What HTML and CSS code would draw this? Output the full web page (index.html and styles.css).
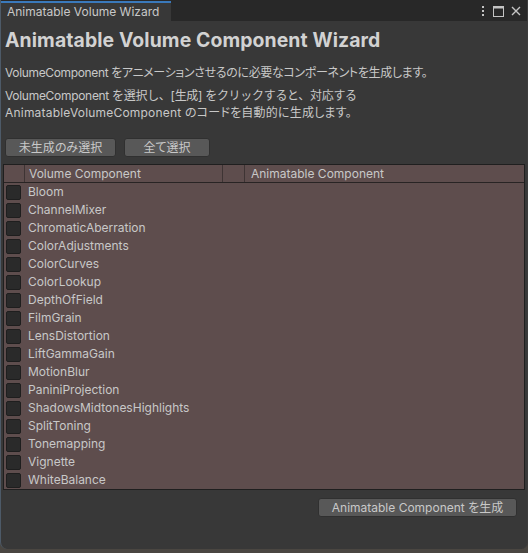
FILE: index.html
```html
<!DOCTYPE html>
<html lang="ja">
<head>
<meta charset="utf-8">
<link rel="stylesheet" href="styles.css">
</head>
<body>
<div class="window">
  <div class="topbar">
    <div class="tab">Animatable Volume Wizard</div>
    <div class="tools">
      <svg width="6" height="12" viewBox="0 0 6 12"><rect x="2" y="1" width="2" height="2" fill="#c4c4c4"/><rect x="2" y="5" width="2" height="2" fill="#c4c4c4"/><rect x="2" y="9" width="2" height="2" fill="#c4c4c4"/></svg>
      <svg width="11" height="11" viewBox="0 0 11 11"><rect x="0.5" y="0.5" width="10" height="10" fill="none" stroke="#c4c4c4"/><rect x="0.5" y="0.5" width="10" height="2" fill="#c4c4c4"/></svg>
      <svg width="10" height="10" viewBox="0 0 10 10"><path d="M1 1L9 9M9 1L1 9" stroke="#c4c4c4" stroke-width="1.4"/></svg>
    </div>
  </div>
  <div class="content">
    <h1 class="title">Animatable Volume Component Wizard</h1>
    <p class="desc desc1">VolumeComponent をアニメーションさせるのに必要なコンポーネントを生成します。</p>
    <p class="desc desc2"><span class="l2">VolumeComponent を選択し、[生成] をクリックすると、対応する</span><br><span class="l3">AnimatableVolumeComponent のコードを自動的に生成します。</span></p>
    <div class="btnrow">
      <button class="btn b1">未生成のみ選択</button>
      <button class="btn b2">全て選択</button>
    </div>
    <div class="table">
      <div class="thead">
        <div class="th c0"></div>
        <div class="th c1">Volume Component</div>
        <div class="th c2"></div>
        <div class="th c3">Animatable Component</div>
      </div>
      <div class="tbody">
        <div class="row"><span class="cb"></span><span class="name">Bloom</span></div>
        <div class="row"><span class="cb"></span><span class="name">ChannelMixer</span></div>
        <div class="row"><span class="cb"></span><span class="name">ChromaticAberration</span></div>
        <div class="row"><span class="cb"></span><span class="name">ColorAdjustments</span></div>
        <div class="row"><span class="cb"></span><span class="name">ColorCurves</span></div>
        <div class="row"><span class="cb"></span><span class="name">ColorLookup</span></div>
        <div class="row"><span class="cb"></span><span class="name">DepthOfField</span></div>
        <div class="row"><span class="cb"></span><span class="name">FilmGrain</span></div>
        <div class="row"><span class="cb"></span><span class="name">LensDistortion</span></div>
        <div class="row"><span class="cb"></span><span class="name">LiftGammaGain</span></div>
        <div class="row"><span class="cb"></span><span class="name">MotionBlur</span></div>
        <div class="row"><span class="cb"></span><span class="name">PaniniProjection</span></div>
        <div class="row"><span class="cb"></span><span class="name">ShadowsMidtonesHighlights</span></div>
        <div class="row"><span class="cb"></span><span class="name">SplitToning</span></div>
        <div class="row"><span class="cb"></span><span class="name">Tonemapping</span></div>
        <div class="row"><span class="cb"></span><span class="name">Vignette</span></div>
        <div class="row"><span class="cb"></span><span class="name">WhiteBalance</span></div>
      </div>
    </div>
    <div class="footer">
      <button class="btn gen">Animatable Component を生成</button>
    </div>
  </div>
</div>
</body>
</html>
```
FILE: styles.css
```css
html, body {
  margin: 0;
  padding: 0;
}
body {
  background: #4a4641;
  width: 528px;
  height: 553px;
  overflow: hidden;
  font-family: Inter, "Noto Sans CJK JP", sans-serif;
  font-size: 12px;
  font-feature-settings: "palt";
  color: #c4c4c4;
}
.window {
  height: 549px;
  background: #383838;
  border-left: 1px solid #4d5a68;
  border-right: 1px solid #3c3c3c;
  border-radius: 0 0 7px 7px;
  overflow: hidden;
  display: flex;
  flex-direction: column;
  box-sizing: border-box;
}
.topbar {
  height: 21px;
  background: #282828;
  display: flex;
  align-items: stretch;
  flex-shrink: 0;
}
.tab {
  width: 170px;
  background: #383838;
  border-top: 2px solid #3a79bb;
  box-sizing: border-box;
  padding-left: 6px;
  line-height: 18px;
  font-size: 12px;
  color: #c8c8c8;
  margin-top: 1px;
}
.tools {
  margin-left: auto;
  display: flex;
  align-items: center;
  gap: 7px;
  padding-right: 6px;
  padding-top: 1px;
}
.content {
  padding: 0 2px 0 2px;
  display: flex;
  flex-direction: column;
  flex: 1;
}
.title {
  margin: 7px 0 0 2px;
  font-size: 19.4px;
  line-height: 24px;
  font-weight: 700;
  color: #d2d2d2;
  letter-spacing: 0.1px;
}
.desc {
  margin: 13px 0 0 2px;
  line-height: 16px;
  color: #c8c8c8;
}
.desc1 {
  letter-spacing: -0.35px;
}
.desc2 {
  margin-top: 6px;
  line-height: 17px;
}
.l2 {
  font-feature-settings: normal;
  letter-spacing: -0.3px;
}
.l3 {
  letter-spacing: 0.2px;
}
.btnrow {
  display: flex;
  gap: 8px;
  margin: 17px 0 0 2px;
}
.btn {
  font-family: Inter, "Noto Sans CJK JP", sans-serif;
  font-size: 12px;
  font-feature-settings: "palt";
  color: #c8c8c8;
  background: #585858;
  border: 1px solid #303030;
  border-radius: 3px;
  height: 19px;
  padding: 0;
  line-height: 16px;
}
.b1 { width: 111px; }
.b2 { width: 86px; }
.table {
  margin-top: 7px;
  border: 1px solid #1f1f1f;
  background: #5e4d4d;
  width: 522px;
  box-sizing: border-box;
}
.thead {
  display: flex;
  height: 18px;
  border-bottom: 1px solid #282424;
  box-sizing: border-box;
}
.th {
  line-height: 17px;
  color: #c8c8c8;
  border-right: 1px solid #3e3434;
  box-sizing: border-box;
  padding-left: 4px;
}
.c0 { width: 21px; }
.c1 { width: 198px; }
.c2 { width: 22px; }
.c3 { flex: 1; border-right: none; padding-left: 6px; }
.row {
  height: 18px;
  display: flex;
  align-items: center;
}
.cb {
  width: 13px;
  height: 13px;
  margin-left: 2px;
  background: #2a2a2a;
  border: 1px solid #1e1e1e;
  border-radius: 2px;
  flex-shrink: 0;
}
.name {
  margin-left: 7px;
  color: #c8c8c8;
  line-height: 18px;
}
.footer {
  display: flex;
  justify-content: flex-end;
  margin-top: 8px;
  padding-right: 8px;
}
.gen {
  width: 199px;
}
```
